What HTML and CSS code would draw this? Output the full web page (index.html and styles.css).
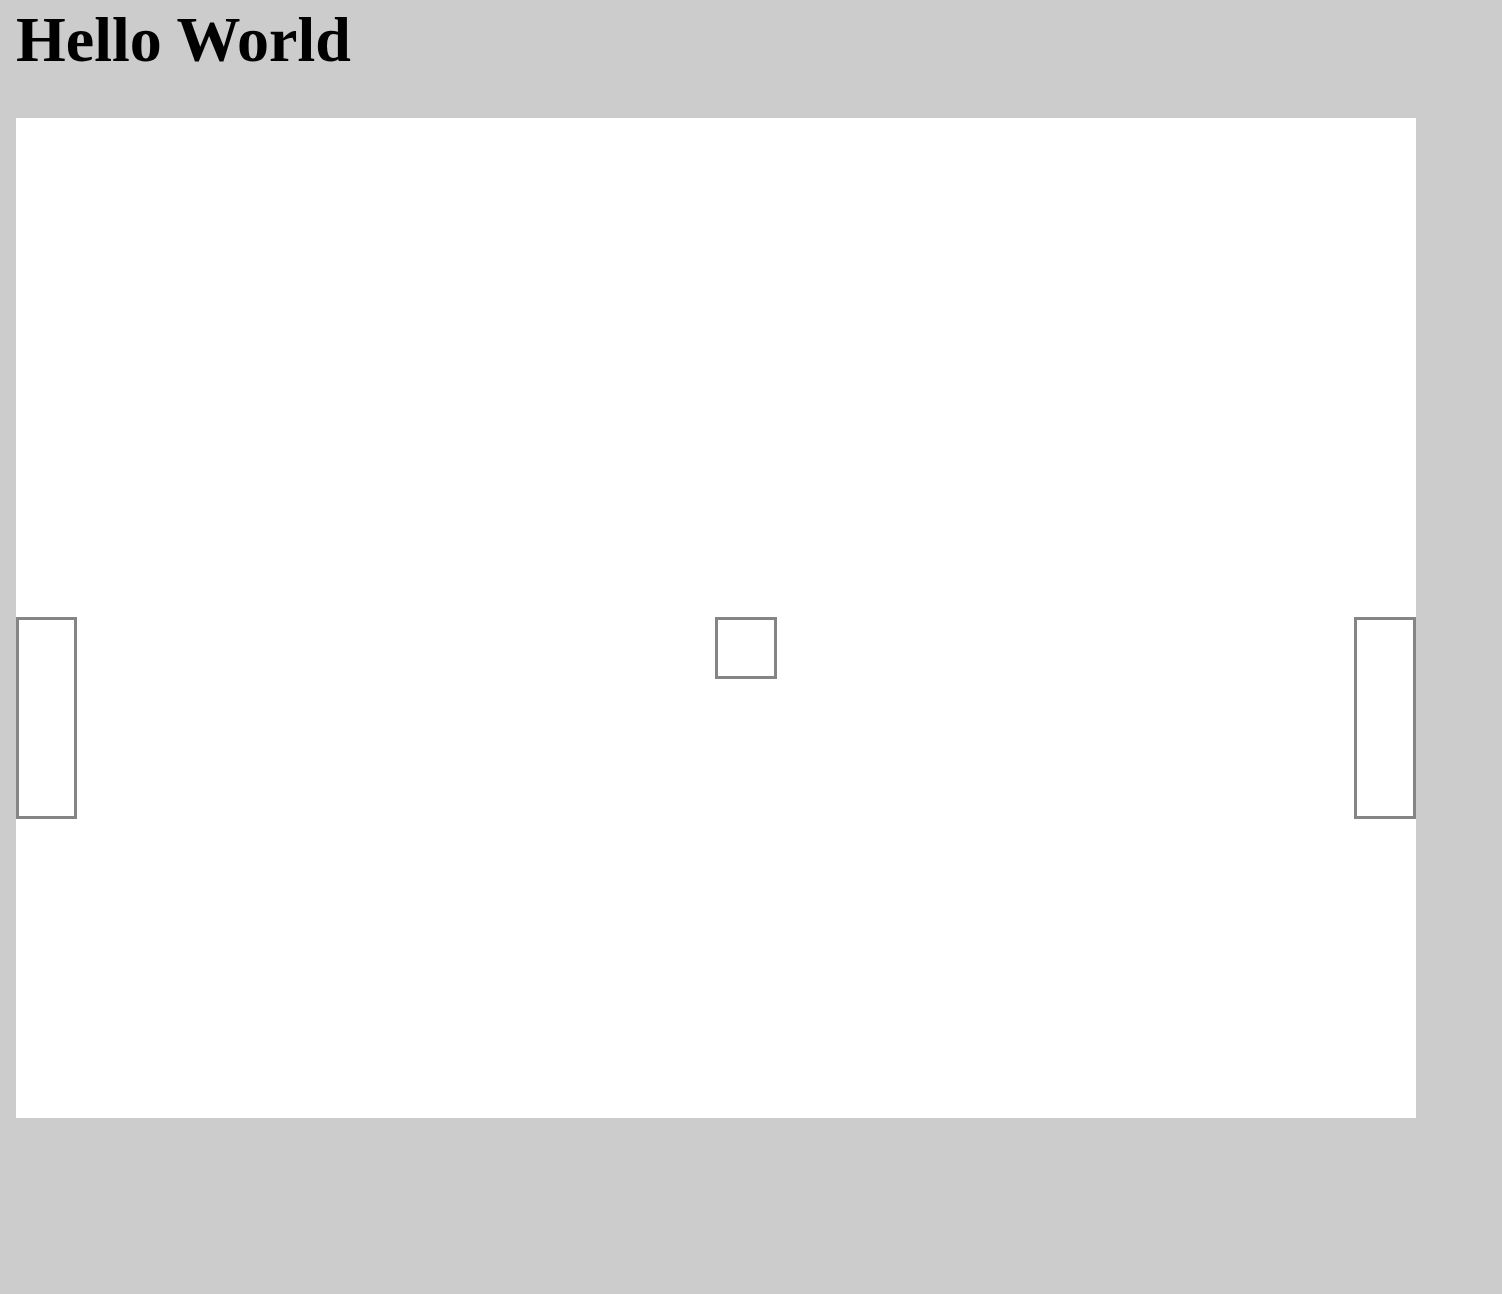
FILE: index.html
```html
<!DOCTYPE html>
<html>
<head>
<meta charset="utf-8">
<title>Hello World</title>
<link rel="stylesheet" href="styles.css">
</head>
<body>
<h1 class="title">Hello World</h1>
<div class="board">
  <div class="paddle paddle-left"></div>
  <div class="ball"></div>
  <div class="paddle paddle-right"></div>
</div>
</body>
</html>
```
FILE: styles.css
```css
html, body {
  margin: 0;
  padding: 0;
  background: #cccccc;
}
body {
  padding: 0 16px;
  font-family: "Liberation Serif", "Times New Roman", serif;
}
.title {
  font-size: 64px;
  font-weight: bold;
  line-height: normal;
  margin: 3px 0 41px 0;
  color: #000;
}
.board {
  position: relative;
  width: 1400px;
  height: 1000px;
  background: #ffffff;
}
.paddle, .ball {
  position: absolute;
  box-sizing: border-box;
  border: 3px solid #858585;
}
.paddle-left {
  left: 0;
  top: 499px;
  width: 61px;
  height: 202px;
}
.paddle-right {
  left: 1338px;
  top: 499px;
  width: 62px;
  height: 202px;
}
.ball {
  left: 699px;
  top: 499px;
  width: 62px;
  height: 62px;
}
```
